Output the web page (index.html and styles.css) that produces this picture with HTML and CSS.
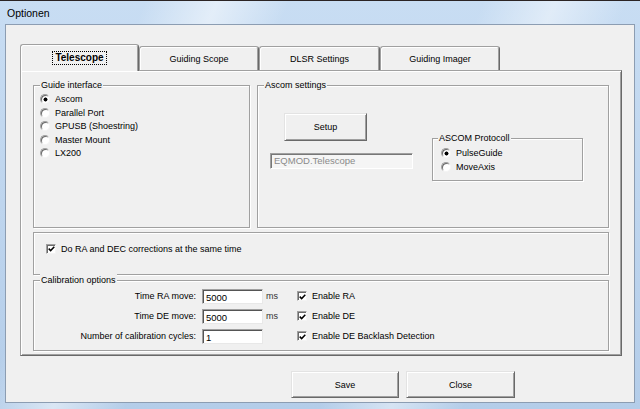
FILE: index.html
```
<!DOCTYPE html>
<html>
<head>
<meta charset="utf-8">
<title>Optionen</title>
<link rel="stylesheet" href="styles.css">
</head>
<body>
<div class="window">
  <div class="titlebar">Optionen</div>
  <div class="client">
    <div class="tabs">
      <div class="tab tab-active"><span class="focus">Telescope</span></div>
      <div class="tab tab-2">Guiding Scope</div>
      <div class="tab tab-3">DLSR Settings</div>
      <div class="tab tab-4">Guiding Imager</div>
    </div>
    <div class="panel">
      <div class="row-top">
        <div class="group group-guide">
          <div class="legend">Guide interface</div>
          <div class="radio-list">
            <div class="opt opt-guide"><span class="radio checked"></span>Ascom</div>
            <div class="opt opt-guide"><span class="radio"></span>Parallel Port</div>
            <div class="opt opt-guide"><span class="radio"></span>GPUSB (Shoestring)</div>
            <div class="opt opt-guide"><span class="radio"></span>Master Mount</div>
            <div class="opt opt-guide"><span class="radio"></span>LX200</div>
          </div>
        </div>
        <div class="group group-ascom">
          <div class="legend">Ascom settings</div>
          <div class="ascom-body">
            <div class="ascom-left">
              <div class="btn btn-setup">Setup</div>
              <div class="textbox">EQMOD.Telescope</div>
            </div>
            <div class="group group-proto">
              <div class="legend legend-proto">ASCOM Protocoll</div>
              <div class="proto-list">
                <div class="opt opt-proto"><span class="radio checked"></span>PulseGuide</div>
                <div class="opt opt-proto"><span class="radio"></span>MoveAxis</div>
              </div>
            </div>
          </div>
        </div>
      </div>
      <div class="group group-check">
        <div class="opt opt-check"><span class="checkbox"><svg width="8" height="8" viewBox="0 0 8 8"><path d="M0.8 3.6 L3 5.8 L7.2 1.4" fill="none" stroke="#000" stroke-width="1.7"/></svg></span>Do RA and DEC corrections at the same time</div>
      </div>
      <div class="group group-calib">
        <div class="legend">Calibration options</div>
        <div class="calib-rows">
          <div class="calib-row">
            <span class="calib-label">Time RA move:</span>
            <span class="input">5000</span>
            <span class="unit">ms</span>
            <span class="opt opt-check"><span class="checkbox"><svg width="8" height="8" viewBox="0 0 8 8"><path d="M0.8 3.6 L3 5.8 L7.2 1.4" fill="none" stroke="#000" stroke-width="1.7"/></svg></span>Enable RA</span>
          </div>
          <div class="calib-row">
            <span class="calib-label">Time DE move:</span>
            <span class="input">5000</span>
            <span class="unit">ms</span>
            <span class="opt opt-check"><span class="checkbox"><svg width="8" height="8" viewBox="0 0 8 8"><path d="M0.8 3.6 L3 5.8 L7.2 1.4" fill="none" stroke="#000" stroke-width="1.7"/></svg></span>Enable DE</span>
          </div>
          <div class="calib-row">
            <span class="calib-label">Number of calibration cycles:</span>
            <span class="input">1</span>
            <span class="unit"></span>
            <span class="opt opt-check"><span class="checkbox"><svg width="8" height="8" viewBox="0 0 8 8"><path d="M0.8 3.6 L3 5.8 L7.2 1.4" fill="none" stroke="#000" stroke-width="1.7"/></svg></span>Enable DE Backlash Detection</span>
          </div>
        </div>
      </div>
    </div>
    <div class="buttons">
      <div class="btn btn-save">Save</div>
      <div class="btn btn-close">Close</div>
    </div>
  </div>
</div>
</body>
</html>
```
FILE: styles.css
```
* { box-sizing: border-box; }
html, body { margin: 0; padding: 0; }
body {
  width: 640px;
  height: 409px;
  overflow: hidden;
  font-family: "Liberation Sans", Arial, sans-serif;
  font-size: 9px;
  color: #000;
  background: #bcd3ec;
}
.window {
  width: 640px;
  height: 409px;
  display: flex;
  flex-direction: column;
  border-top: 1px solid #2b2424;
  background:
    linear-gradient(112deg, rgba(255,255,255,0) 18%, rgba(255,255,255,.5) 27%, rgba(255,255,255,0) 36%, rgba(255,255,255,0) 60%, rgba(255,255,255,.45) 69%, rgba(255,255,255,0) 78%),
    linear-gradient(#c8ddf3, #b4cde9);
}
.titlebar {
  height: 23px;
  padding: 5px 0 0 7px;
  font-size: 10.5px;
  line-height: 14px;
}
.client {
  flex: 1;
  margin: 0 5px 6px 5px;
  background: #f0f0f0;
  border: 1px solid #8c9db2;
  padding: 19px 0 0 14px;
}
.tabs {
  display: flex;
  align-items: flex-end;
  height: 26px;
}
.tab {
  height: 24px;
  background: #f0f0f0;
  border: 1px solid #a0a0a0;
  border-right-color: #696969;
  border-bottom: none;
  border-radius: 3px 3px 0 0;
  box-shadow: inset 1px 1px 0 #fff, inset -1px 0 0 #a0a0a0;
  display: flex;
  align-items: center;
  justify-content: center;
  white-space: nowrap;
}
.tab-active {
  width: 119px;
  height: 27px;
  margin-bottom: -1px;
  position: relative;
  z-index: 1;
  font-weight: bold;
  font-size: 10px;
}
.focus {
  border: 1px dotted #000;
  padding: 0 2px;
  line-height: 12px;
}
.tab-2 { width: 120px; }
.tab-3 { width: 121px; }
.tab-4 { width: 120px; }
.panel {
  width: 602px;
  height: 286px;
  border: 1px solid;
  border-color: #a0a0a0 #696969 #696969 #a0a0a0;
  box-shadow: inset 1px 1px 0 #fff, inset -1px -1px 0 #a0a0a0;
  padding: 7px 0 0 12px;
}
.row-top {
  display: flex;
  gap: 7px;
  height: 150px;
}
.group {
  border: 1px solid #a0a0a0;
  box-shadow: inset 1px 1px 0 #fff, 1px 1px 0 #fff;
}
.legend {
  width: fit-content;
  height: 13px;
  line-height: 13px;
  margin: -7px 0 0 6px;
  padding: 0 1px;
  background: #f0f0f0;
  white-space: nowrap;
}
.group-guide { width: 217px; height: 143px; margin-top: 7px; }
.group-ascom { width: 352px; height: 143px; margin-top: 7px; }
.radio-list { padding-left: 6px; margin-top: 0.5px; }
.opt {
  display: flex;
  align-items: center;
  white-space: nowrap;
}
.opt-guide { height: 13.5px; }
.radio {
  width: 10px;
  height: 10px;
  flex: none;
  border-radius: 50%;
  background: #fff;
  border: 1px solid;
  border-color: #a0a0a0 #f4f4f4 #f4f4f4 #a0a0a0;
  box-shadow: inset 1px 1px 0 #6a6a6a;
  margin-right: 5px;
}
.radio.checked {
  background: radial-gradient(circle at 4.5px 4.5px, #000 0 1.7px, #fff 2.3px);
}
.ascom-body { display: flex; }
.ascom-left {
  width: 174px;
  flex: none;
  display: flex;
  flex-direction: column;
  align-items: flex-start;
}
.btn {
  display: flex;
  align-items: center;
  justify-content: center;
  background: #f0f0f0;
  border: 1px solid;
  border-color: #e3e3e3 #696969 #696969 #e3e3e3;
  box-shadow: inset 1px 1px 0 #fff, inset -1px -1px 0 #a0a0a0;
}
.btn-setup {
  width: 83px;
  height: 28px;
  margin: 21px 0 0 26px;
}
.textbox {
  width: 143px;
  height: 16px;
  margin: 12px 0 0 12px;
  background: #f5f5f5;
  color: #8a8a8a;
  border: 1px solid;
  border-color: #a0a0a0 #fff #fff #a0a0a0;
  box-shadow: inset 1px 1px 0 #777;
  padding-left: 3px;
  line-height: 14px;
  font-size: 9.5px;
}
.group-proto {
  width: 151px;
  height: 43px;
  margin-top: 46px;
}
.legend-proto { margin-left: 5px; }
.proto-list { padding-left: 8px; margin-top: 1px; }
.opt-proto { height: 14px; }
.group-check {
  width: 576px;
  height: 43px;
  margin-top: 4px;
  padding: 8.5px 0 0 12px;
}
.opt-check { height: 14px; }
.checkbox {
  width: 10px;
  height: 10px;
  flex: none;
  background: #fff;
  border: 1px solid;
  border-color: #a0a0a0 #f4f4f4 #f4f4f4 #a0a0a0;
  box-shadow: inset 1px 1px 0 #6a6a6a;
  display: flex;
  align-items: center;
  justify-content: center;
  margin-right: 5px;
}
.checkbox svg { display: block; margin: 1px 0 0 1px; }
.group-calib {
  width: 576px;
  height: 71px;
  margin-top: 5px;
}
.calib-rows { margin-top: -1px; }
.calib-row {
  display: flex;
  align-items: center;
  height: 20px;
  white-space: nowrap;
}
.calib-label {
  width: 162px;
  text-align: right;
}
.input {
  width: 61px;
  height: 15px;
  margin-left: 6px;
  background: #fff;
  border: 1px solid;
  border-color: #a0a0a0 #e8e8e8 #e8e8e8 #a0a0a0;
  box-shadow: inset 1px 1px 0 #555;
  padding: 1px 0 0 3px;
  line-height: 13px;
  font-size: 9.5px;
}
.unit {
  width: 31px;
  margin-left: 3px;
  color: #333;
}
.buttons {
  display: flex;
  gap: 7px;
  margin: 15px 0 0 271px;
}
.btn-save { width: 108px; height: 27px; }
.btn-close { width: 109px; height: 27px; }
```
